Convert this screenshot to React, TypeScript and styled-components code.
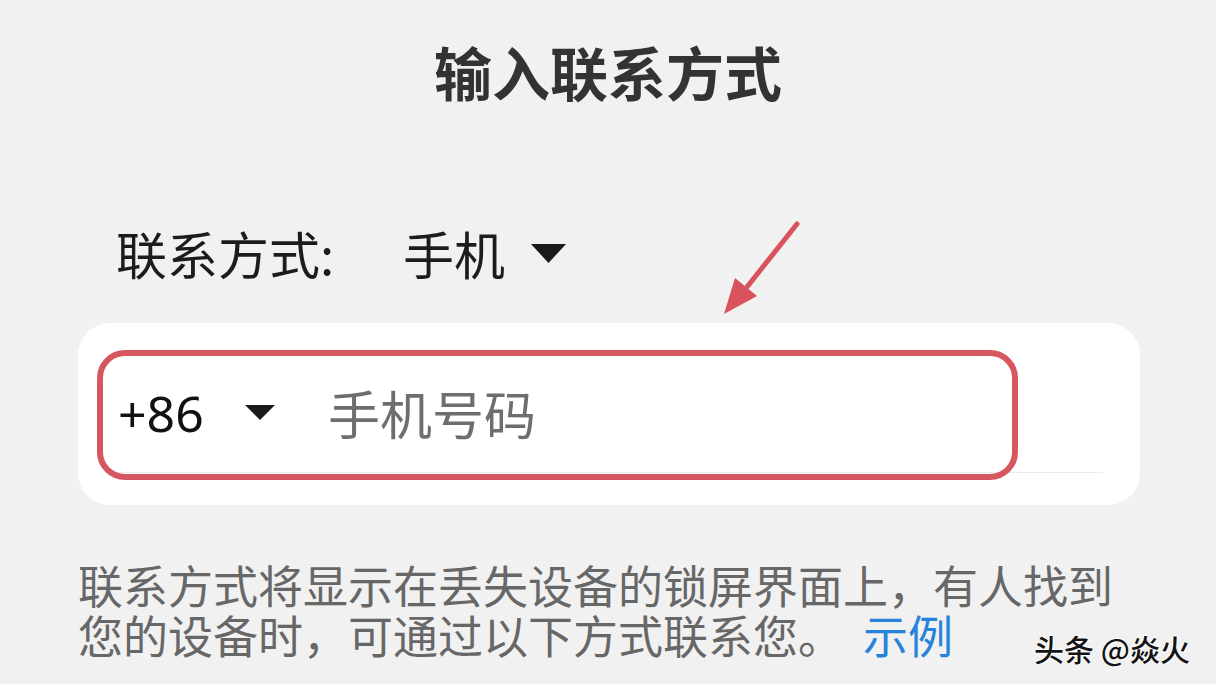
import styled, { createGlobalStyle } from 'styled-components'

const GlobalStyle = createGlobalStyle`
  html, body {
    margin: 0;
    padding: 0;
    background: #f1f1f1;
  }
  body {
    font-family: "Noto Sans CJK SC", "Noto Sans", sans-serif;
  }
`

function Caret({ width, height }: { width: number, height: number }) {
  return (
    <svg width={width} height={height} viewBox={`0 0 ${width} ${height}`}>
      <polygon points={`0,0 ${width},0 ${width / 2},${height}`} fill="#1a1a1a" />
    </svg>
  )
}

function ContactForm() {
  return (
    <Page>
      <Title>输入联系方式</Title>

      <TypeRow>
        <TypeLabel>联系方式:</TypeLabel>
        <TypeValue>手机</TypeValue>
        <Caret width={35} height={19} />
      </TypeRow>

      <Card>
        <InputRow>
          <CountryCode>+86</CountryCode>
          <Caret width={30} height={15} />
          <Placeholder>手机号码</Placeholder>
        </InputRow>
        <Highlight />
      </Card>

      <Hint>
        <HintLine>联系方式将显示在丢失设备的锁屏界面上，有人找到</HintLine>
        <HintLine>
          您的设备时，可通过以下方式联系您。<HintLink>示例</HintLink>
        </HintLine>
      </Hint>

      <Arrow width="100" height="110" viewBox="0 0 100 110">
        <line x1="77" y1="4" x2="27" y2="67" stroke="#d9525c" strokeWidth="5" strokeLinecap="round" />
        <polygon points="4,94 15,58 37,76" fill="#d9525c" />
      </Arrow>

      <Watermark>头条 @焱火</Watermark>
    </Page>
  )
}

export default function App() {
  return (
    <>
      <GlobalStyle />
      <ContactForm />
    </>
  )
}

const Page = styled.div`
  position: relative;
  width: 1216px;
  height: 684px;
  overflow: hidden;
  display: flex;
  flex-direction: column;
  padding-top: 36px;
  box-sizing: border-box;
`

const Title = styled.h1`
  margin: 0;
  text-align: center;
  font-size: 58px;
  line-height: 70px;
  font-weight: 700;
  color: #333333;
`

const TypeRow = styled.div`
  display: flex;
  align-items: center;
  height: 60px;
  margin-top: 117px;
  padding-left: 116px;
  color: #1c1c1c;
  font-size: 51px;
`

const TypeLabel = styled.span`
  width: 287px;
`

const TypeValue = styled.span`
  margin-right: 26px;
`

const Card = styled.div`
  position: relative;
  height: 182px;
  margin: 40px 76px 0 78px;
  background: #ffffff;
  border-radius: 32px;
`

const InputRow = styled.div`
  display: flex;
  align-items: center;
  height: 150px;
  box-sizing: border-box;
  padding-top: 30px;
  margin: 0 37px 0 40px;
  border-bottom: 1px solid #ececec;
`

const CountryCode = styled.span`
  font-family: "Noto Sans", "Noto Sans CJK SC", sans-serif;
  font-size: 50px;
  color: #111111;
  width: 127px;
`

const Placeholder = styled.span`
  margin-left: 53px;
  font-size: 52px;
  color: #6e6e6e;
`

const Highlight = styled.div`
  position: absolute;
  left: 19px;
  top: 27px;
  width: 921px;
  height: 130px;
  box-sizing: border-box;
  border: 6px solid #d6575f;
  border-radius: 28px;
`

const Hint = styled.div`
  margin-top: 55px;
  padding-left: 78px;
  font-size: 45px;
  color: #676767;
`

const HintLine = styled.div`
  height: 50px;
  line-height: 50px;
`

const HintLink = styled.span`
  margin-left: 20px;
  color: #2782d9;
`

const Arrow = styled.svg`
  position: absolute;
  left: 720px;
  top: 220px;
`

const Watermark = styled.div`
  position: absolute;
  left: 1034px;
  top: 628px;
  font-size: 30px;
  line-height: 40px;
  font-weight: 500;
  color: #141414;
  text-shadow: 1px 1px 0 #ffffff, -1px 0 0 #ffffff, 0 -1px 0 #ffffff;
`
